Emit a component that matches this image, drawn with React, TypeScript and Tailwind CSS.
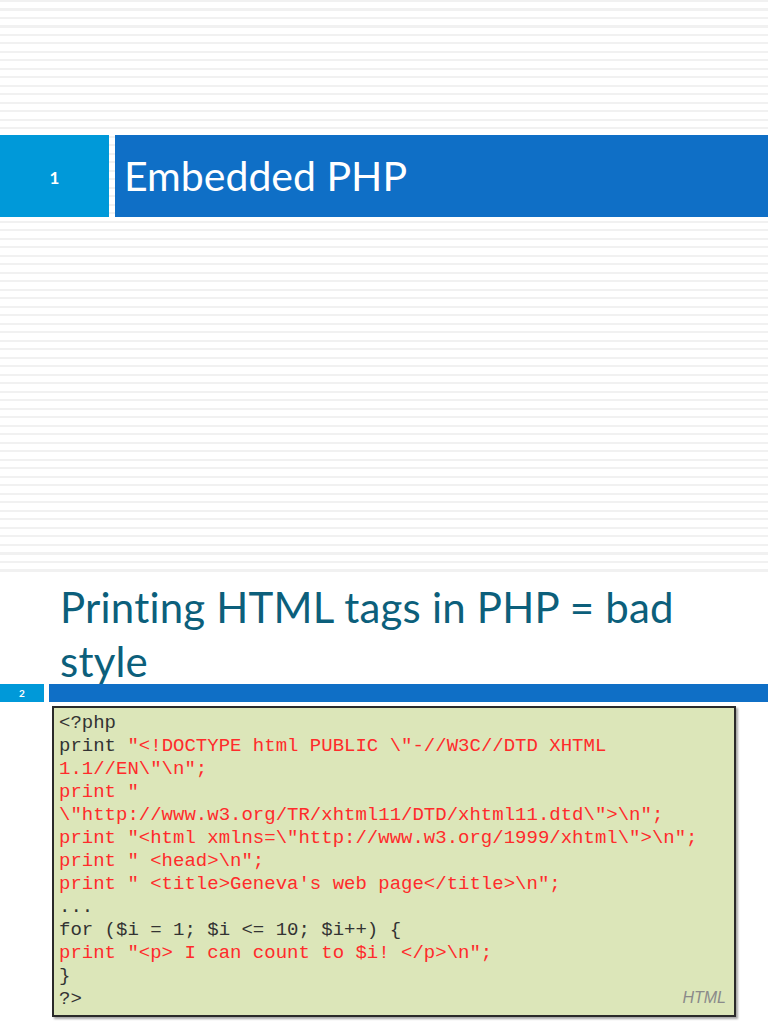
import React from 'react';

type Seg = { t: string; red?: boolean };

const codeLines: Seg[][] = [
  [{ t: '<?php' }],
  [{ t: 'print ' }, { t: '"<!DOCTYPE html PUBLIC \\"-//W3C//DTD XHTML', red: true }],
  [{ t: '1.1//EN\\"\\n";', red: true }],
  [{ t: 'print "', red: true }],
  [{ t: '\\"http://www.w3.org/TR/xhtml11/DTD/xhtml11.dtd\\">\\n";', red: true }],
  [{ t: 'print "<html xmlns=\\"http://www.w3.org/1999/xhtml\\">\\n";', red: true }],
  [{ t: 'print " <head>\\n";', red: true }],
  [{ t: 'print " <title>Geneva\'s web page</title>\\n";', red: true }],
  [{ t: '...' }],
  [{ t: 'for ($i = 1; $i <= 10; $i++) {' }],
  [{ t: 'print "<p> I can count to $i! </p>\\n";', red: true }],
  [{ t: '}' }],
  [{ t: '?>' }],
];

const App: React.FC = () => {
  return (
    <div className="w-[768px] h-[1024px] overflow-hidden bg-white font-['Lato',sans-serif]">
      {/* slide 1 */}
      <div className="h-[576px] pt-[135px] bg-[repeating-linear-gradient(to_bottom,#f1f1f1_0px,#f1f1f1_2px,#ffffff_2px,#ffffff_8.5px)]">
        <div className="flex h-[82px] gap-[6px]">
          <div className="w-[109px] bg-[#0099d9] flex items-center justify-center pt-[3px] text-white text-[17px] font-bold">
            1
          </div>
          <div className="flex-1 bg-[#0f6fc6] flex items-center pl-[9px] text-white text-[41px]">
            Embedded PHP
          </div>
        </div>
      </div>

      {/* slide 2 */}
      <div className="relative z-10 pl-[60px] pt-[4px] text-[#0c5f7b] text-[42px] leading-[54px] tracking-[0.2px]">
        Printing HTML tags in PHP = bad
        <br />
        style
      </div>
      <div className="flex h-[18px] gap-[5px] -mt-[4px]">
        <div className="w-[44px] bg-[#0099d9] flex items-center justify-center text-white text-[10px] font-bold">
          2
        </div>
        <div className="flex-1 bg-[#0f6fc6]" />
      </div>

      <div className="ml-[52px] mt-[4px] w-[684px] h-[311px] relative border-2 border-[#2a2a2a] bg-[#dce6b9] pl-[5px] pt-[4px] shadow-[2px_2px_2px_rgba(0,0,0,0.35)] font-['Liberation_Mono',monospace] text-[19px] leading-[23px] text-[#333333]">
        {codeLines.map((line, i) => (
          <div key={i} className="whitespace-pre">
            {line.map((s, j) => (
              <span key={j} className={s.red ? 'text-[#ff2b2b]' : ''}>
                {s.t}
              </span>
            ))}
          </div>
        ))}
        <div className="absolute right-[8px] bottom-[8px] font-['Liberation_Sans',sans-serif] italic text-[16px] leading-[18px] text-[#8a8a8a]">
          HTML
        </div>
      </div>
    </div>
  );
};

export default App;
